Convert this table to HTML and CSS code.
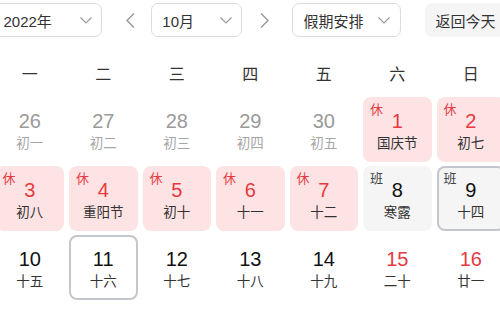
FILE: index.html
```html
<!DOCTYPE html>
<html lang="zh-CN">
<head>
<meta charset="utf-8">
<link rel="stylesheet" href="styles.css">
</head>
<body>
<div class="cal">
  <div class="toolbar">
    <div class="select year">
      <span>2022年</span>
      <svg class="chev" width="12" height="7" viewBox="0 0 12 7"><polyline points="0.5,0.5 6,6 11.5,0.5" fill="none" stroke="#9a9a9a" stroke-width="1.2"/></svg>
    </div>
    <div class="arrow prev"><svg width="9" height="15" viewBox="0 0 9 15"><polyline points="8,0.5 1,7.5 8,14.5" fill="none" stroke="#999" stroke-width="1.5"/></svg></div>
    <div class="select month">
      <span>10月</span>
      <svg class="chev" width="12" height="7" viewBox="0 0 12 7"><polyline points="0.5,0.5 6,6 11.5,0.5" fill="none" stroke="#9a9a9a" stroke-width="1.2"/></svg>
    </div>
    <div class="arrow next"><svg width="9" height="15" viewBox="0 0 9 15"><polyline points="1,0.5 8,7.5 1,14.5" fill="none" stroke="#999" stroke-width="1.5"/></svg></div>
    <div class="select holiday">
      <span>假期安排</span>
      <svg class="chev" width="12" height="7" viewBox="0 0 12 7"><polyline points="0.5,0.5 6,6 11.5,0.5" fill="none" stroke="#9a9a9a" stroke-width="1.2"/></svg>
    </div>
    <div class="today-btn">返回今天</div>
  </div>

  <div class="weekdays">
    <div>一</div><div>二</div><div>三</div><div>四</div><div>五</div><div>六</div><div>日</div>
  </div>

  <div class="grid">
    <div class="day other"><div class="num">26</div><div class="lunar">初一</div></div>
    <div class="day other"><div class="num">27</div><div class="lunar">初二</div></div>
    <div class="day other"><div class="num">28</div><div class="lunar">初三</div></div>
    <div class="day other"><div class="num">29</div><div class="lunar">初四</div></div>
    <div class="day other"><div class="num">30</div><div class="lunar">初五</div></div>
    <div class="day rest"><span class="tag">休</span><div class="num">1</div><div class="lunar">国庆节</div></div>
    <div class="day rest"><span class="tag">休</span><div class="num">2</div><div class="lunar">初七</div></div>

    <div class="day rest"><span class="tag">休</span><div class="num">3</div><div class="lunar">初八</div></div>
    <div class="day rest"><span class="tag">休</span><div class="num">4</div><div class="lunar">重阳节</div></div>
    <div class="day rest"><span class="tag">休</span><div class="num">5</div><div class="lunar">初十</div></div>
    <div class="day rest"><span class="tag">休</span><div class="num">6</div><div class="lunar">十一</div></div>
    <div class="day rest"><span class="tag">休</span><div class="num">7</div><div class="lunar">十二</div></div>
    <div class="day work"><span class="tag">班</span><div class="num">8</div><div class="lunar">寒露</div></div>
    <div class="day work outlined"><span class="tag">班</span><div class="num">9</div><div class="lunar">十四</div></div>

    <div class="day"><div class="num">10</div><div class="lunar">十五</div></div>
    <div class="day outlined"><div class="num">11</div><div class="lunar">十六</div></div>
    <div class="day"><div class="num">12</div><div class="lunar">十七</div></div>
    <div class="day"><div class="num">13</div><div class="lunar">十八</div></div>
    <div class="day"><div class="num">14</div><div class="lunar">十九</div></div>
    <div class="day weekend"><div class="num">15</div><div class="lunar">二十</div></div>
    <div class="day weekend"><div class="num">16</div><div class="lunar">廿一</div></div>
  </div>
</div>
</body>
</html>
```

FILE: styles.css
```css
html, body {
  margin: 0;
  padding: 0;
  background: #fff;
  overflow: hidden;
}
body {
  font-family: "Liberation Sans", "Noto Sans CJK SC", sans-serif;
  color: #333;
}
.cal {
  width: 510px;
  margin-left: -4.5px;
}
.toolbar {
  display: flex;
  align-items: center;
  padding-top: 3px;
  height: 34px;
}
.select {
  box-sizing: border-box;
  height: 34px;
  border: 1px solid #dcdcdc;
  border-radius: 7px;
  display: flex;
  align-items: center;
  justify-content: space-between;
  padding: 0 9px 0 10px;
  font-size: 15px;
  color: #333;
}
.select.year {
  width: 110px;
  margin-left: -3px;
}
.select.month {
  width: 91px;
}
.select.holiday {
  width: 110px;
  padding-right: 10px;
}
.arrow {
  display: flex;
  align-items: center;
  justify-content: center;
  width: 24px;
  height: 34px;
}
.arrow.prev {
  margin: 0 9px 0 17px;
}
.arrow.next {
  margin: 0 16px 0 11px;
}
.today-btn {
  box-sizing: border-box;
  height: 34px;
  margin-left: 24px;
  padding: 0 10px;
  background: #f5f5f6;
  border-radius: 7px;
  display: flex;
  align-items: center;
  font-size: 15px;
  color: #333;
  white-space: nowrap;
}
.weekdays {
  display: grid;
  grid-template-columns: repeat(7, 68.5px);
  column-gap: 5px;
  margin-top: 27px;
  height: 22px;
  line-height: 22px;
  font-size: 16px;
  color: #333;
  text-align: center;
}
.grid {
  display: grid;
  grid-template-columns: repeat(7, 68.5px);
  grid-auto-rows: 65px;
  column-gap: 5px;
  row-gap: 4px;
  margin-top: 11px;
}
.day {
  position: relative;
  box-sizing: border-box;
  border-radius: 8px;
  padding-top: 12px;
  text-align: center;
}
.num {
  font-size: 20px;
  line-height: 25px;
  color: #111;
}
.lunar {
  font-size: 13.5px;
  line-height: 20px;
  color: #333;
}
.tag {
  position: absolute;
  left: 7px;
  top: 6px;
  font-size: 13px;
  line-height: 14px;
}
.other .num {
  color: #9a9a9a;
}
.other .lunar {
  color: #a6a6a6;
}
.rest {
  background: #fde3e4;
}
.rest .num,
.rest .tag {
  color: #e53a3f;
}
.work {
  background: #f5f5f6;
}
.work .tag {
  color: #444;
}
.weekend .num {
  color: #e53a3f;
}
.outlined {
  box-shadow: inset 0 0 0 2px #c3c6cc;
}
```
